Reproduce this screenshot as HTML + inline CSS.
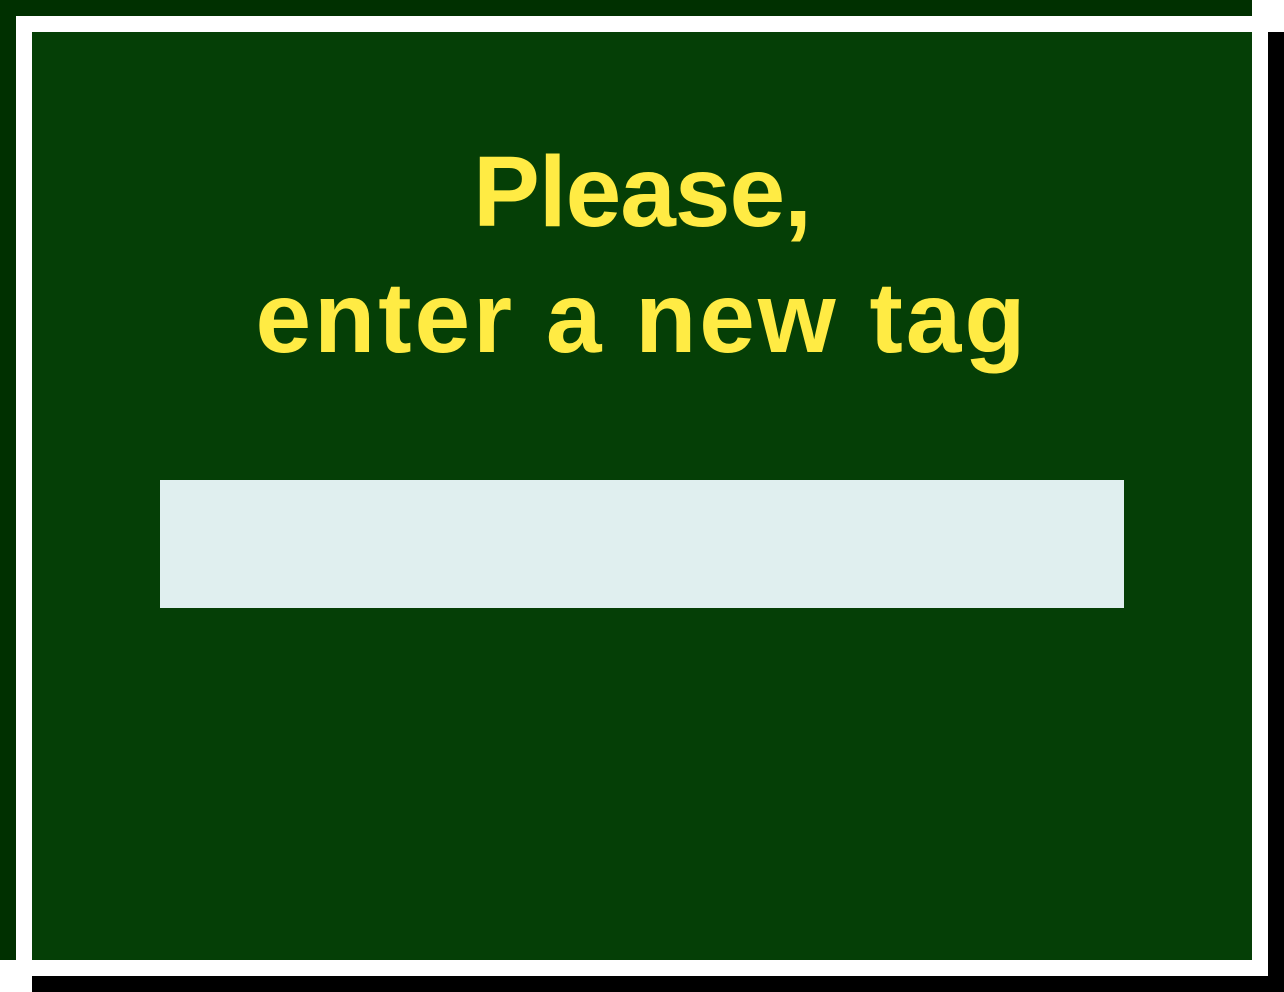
<!DOCTYPE html>
<html><head><style>
html,body{margin:0;padding:0;}
body{width:1284px;height:992px;position:relative;background:#fff;overflow:hidden;}
.a{position:absolute;}
.t{position:absolute;left:32px;width:1220px;text-align:center;color:#ffeb44;font-family:"Liberation Sans",sans-serif;font-weight:bold;font-size:100px;line-height:1;white-space:nowrap;}
</style></head><body>
<div class="a" style="left:0;top:0;width:1252px;height:16px;background:#003000"></div>
<div class="a" style="left:0;top:0;width:16px;height:960px;background:#003000"></div>
<div class="a" style="left:1268px;top:32px;width:16px;height:960px;background:#000"></div>
<div class="a" style="left:32px;top:976px;width:1252px;height:16px;background:#000"></div>
<div class="a" style="left:32px;top:32px;width:1220px;height:928px;background:#053f06"></div>
<div class="t" style="top:142px;letter-spacing:-1px;">Please,</div>
<div class="t" style="top:268px;letter-spacing:3px;">enter a new tag</div>
<div class="a" style="left:160px;top:480px;width:964px;height:128px;background:#e0efef"></div>
</body></html>
